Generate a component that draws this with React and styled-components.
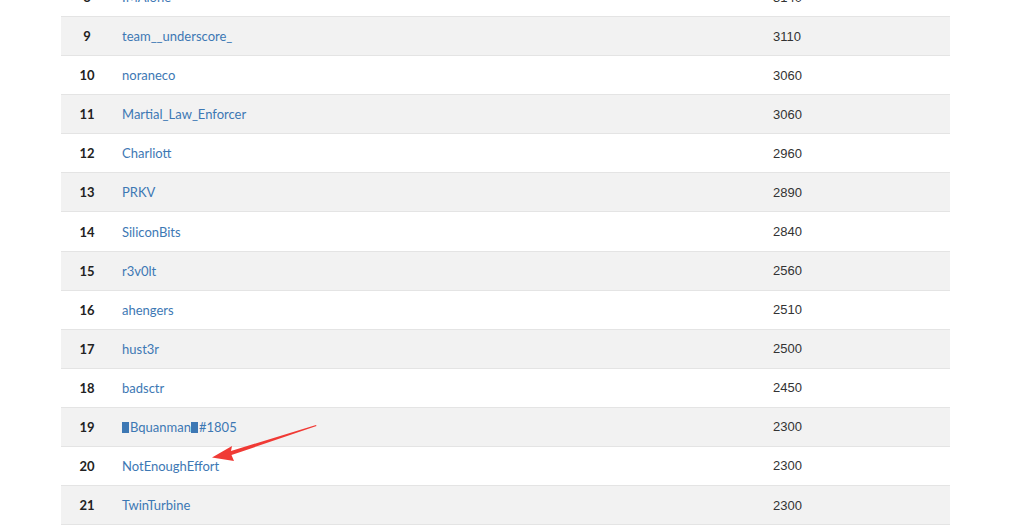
import React from 'react';
import styled, { createGlobalStyle } from 'styled-components';

const GlobalStyle = createGlobalStyle`
  html, body {
    margin: 0;
    padding: 0;
    background: #fff;
    overflow: hidden;
  }
`;

const Page = styled.div`
  position: relative;
  width: 1024px;
  height: 527px;
  overflow: hidden;
`;

const Board = styled.table`
  margin: -23px 0 0 61px;
  width: 889px;
  border-collapse: collapse;
  font-family: Lato, "Liberation Sans", sans-serif;
  font-size: 13px;
`;

const Row = styled.tr`
  background: ${(p) => (p.$striped ? '#f2f2f2' : '#fff')};
`;

const Cell = styled.td`
  height: 38.08px;
  padding: 0 8px;
  border-top: 1px solid #e4e4e4;
  vertical-align: middle;
`;

const Rank = styled(Cell)`
  width: 36px;
  text-align: center;
  font-weight: 700;
  color: #222;
`;

const Name = styled(Cell)`
  padding-left: 9px;
  color: #3d78b4;
`;

const Score = styled(Cell)`
  width: 169px;
  font-family: "Liberation Sans", Arial, sans-serif;
  color: #333;
`;

// unrenderable glyph shown as a filled box in the original
const Tofu = styled.span`
  display: inline-block;
  width: 7px;
  height: 11px;
  margin-right: 1px;
  background: #3d78b4;
  vertical-align: -1px;
`;

const Arrow = styled.svg`
  position: absolute;
  left: 0;
  top: 0;
  pointer-events: none;
`;

const rows = [
  [8, 'IMAlone', 3140],
  [9, 'team__underscore_', 3110],
  [10, 'noraneco', 3060],
  [11, 'Martial_Law_Enforcer', 3060],
  [12, 'Charliott', 2960],
  [13, 'PRKV', 2890],
  [14, 'SiliconBits', 2840],
  [15, 'r3v0lt', 2560],
  [16, 'ahengers', 2510],
  [17, 'hust3r', 2500],
  [18, 'badsctr', 2450],
  [19, '\u2588Bquanman\u2588#1805', 2300],
  [20, 'NotEnoughEffort', 2300],
  [21, 'TwinTurbine', 2300],
  [22, 'CyberMouflons', 2250],
];

function renderName(name) {
  return name.split('\u2588').map((part, i) => (
    <React.Fragment key={i}>
      {i > 0 && <Tofu />}
      {part}
    </React.Fragment>
  ));
}

export default function App() {
  return (
    <Page>
      <GlobalStyle />
      <Board>
        <tbody>
          {rows.map(([rank, name, score]) => (
            <Row key={rank} $striped={rank % 2 === 1}>
              <Rank>{rank}</Rank>
              <Name>{renderName(name)}</Name>
              <Score>{score}</Score>
            </Row>
          ))}
        </tbody>
      </Board>
      <Arrow width="1024" height="527" viewBox="0 0 1024 527">
        <polygon
          points="316,425 231,451 232,446 212,457.5 234,461 231.5,455 316.5,426"
          fill="#f03a35"
        />
      </Arrow>
    </Page>
  );
}
